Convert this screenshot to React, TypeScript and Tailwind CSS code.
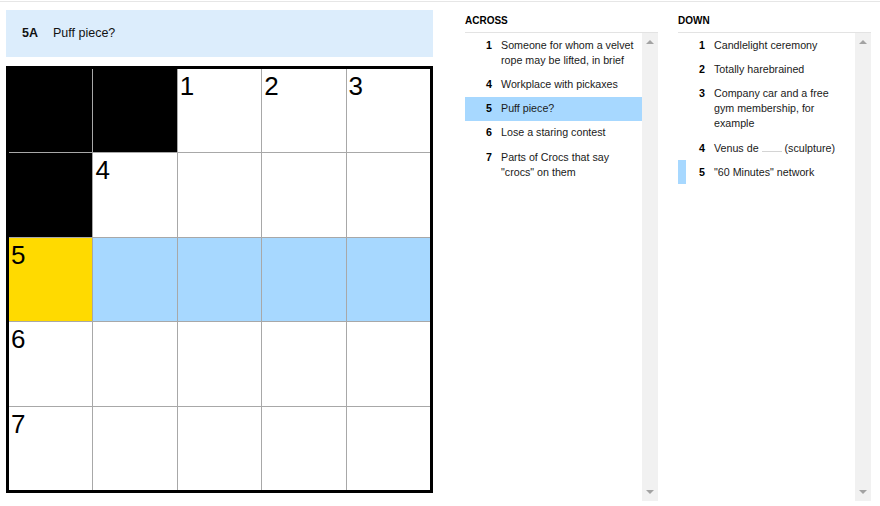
import type { ReactNode } from "react";

type Clue = { num: number; text: ReactNode };

const across: Clue[] = [
  { num: 1, text: "Someone for whom a velvet rope may be lifted, in brief" },
  { num: 4, text: "Workplace with pickaxes" },
  { num: 5, text: "Puff piece?" },
  { num: 6, text: "Lose a staring contest" },
  { num: 7, text: 'Parts of Crocs that say "crocs" on them' },
];

const down: Clue[] = [
  { num: 1, text: "Candlelight ceremony" },
  { num: 2, text: "Totally harebrained" },
  { num: 3, text: "Company car and a free gym membership, for example" },
  {
    num: 4,
    text: (
      <>
        Venus de <span className="inline-block w-[20px] border-b border-[#d4d4d4] align-baseline" /> (sculpture)
      </>
    ),
  },
  { num: 5, text: '"60 Minutes" network' },
];

// black squares and corner numbers, row by row
const cells: { black?: boolean; num?: number }[][] = [
  [{ black: true }, { black: true }, { num: 1 }, { num: 2 }, { num: 3 }],
  [{ black: true }, { num: 4 }, {}, {}, {}],
  [{ num: 5 }, {}, {}, {}, {}],
  [{ num: 6 }, {}, {}, {}, {}],
  [{ num: 7 }, {}, {}, {}, {}],
];

function Scrollbar() {
  return (
    <div className="flex w-[16px] flex-col items-center justify-between bg-[#f1f1f1] py-[7px]">
      <div className="h-0 w-0 border-x-[4px] border-b-[4px] border-x-transparent border-b-[#a3a3a3]" />
      <div className="h-0 w-0 border-x-[4px] border-t-[4px] border-x-transparent border-t-[#a3a3a3]" />
    </div>
  );
}

function ClueList({
  title,
  clues,
  active,
  related,
}: {
  title: string;
  clues: Clue[];
  active?: number;
  related?: number;
}) {
  return (
    <div className="flex w-[193px] flex-col">
      <h3 className="h-[30px] pt-[13px] text-[10px] font-bold uppercase leading-[12px] text-black">
        {title}
      </h3>
      <div className="flex h-[469px] border-t border-[#e3e3e3]">
        <ul className="flex-1">
          {clues.map((clue) => (
            <li
              key={clue.num}
              className={`relative flex py-[4.5px] text-[10.7px] leading-[15.2px] ${
                clue.num === active ? "bg-[#a7d8ff]" : ""
              }`}
            >
              {clue.num === related && (
                <span className="absolute top-0 left-0 h-full w-[8px] bg-[#a7d8ff]" />
              )}
              <span className="w-[27px] shrink-0 text-right font-bold text-black">
                {clue.num}
              </span>
              <span className="ml-[9px] pr-[5px] text-[#1a1a1a]">{clue.text}</span>
            </li>
          ))}
        </ul>
        <Scrollbar />
      </div>
    </div>
  );
}

export default function App() {
  return (
    <div
      className="h-[506px] w-[880px] overflow-hidden bg-white"
      style={{ fontFamily: '"Liberation Sans", Arial, sans-serif' }}
    >
      <div className="h-[2px] border-b border-[#e6e6e6]" />
      <div className="flex pl-[6px]">
        <div className="w-[427px] pt-[8px]">
          <div className="flex h-[47px] items-center bg-[#dcedfc] pl-[16px] text-[12.5px] text-[#121212]">
            <span className="w-[31px] font-bold">5A</span>
            <span>Puff piece?</span>
          </div>
          <div className="mt-[9px] grid h-[427px] grid-cols-5 grid-rows-5 gap-px border-[3px] border-black bg-[#a8a8a8]">
            {cells.map((row, r) =>
              row.map((cell, c) => {
                let bg = "bg-white";
                if (cell.black) bg = "bg-black";
                else if (r === 2 && c === 0) bg = "bg-[#ffda00]";
                else if (r === 2) bg = "bg-[#a7d8ff]";
                return (
                  <div key={`${r}-${c}`} className={`relative ${bg}`}>
                    {cell.num && (
                      <span className="absolute top-[4px] left-[2px] text-[26px] leading-none text-black">
                        {cell.num}
                      </span>
                    )}
                  </div>
                );
              }),
            )}
          </div>
        </div>
        <div className="ml-[32px] flex gap-[20px]">
          <ClueList title="Across" clues={across} active={5} />
          <ClueList title="Down" clues={down} related={5} />
        </div>
      </div>
    </div>
  );
}
